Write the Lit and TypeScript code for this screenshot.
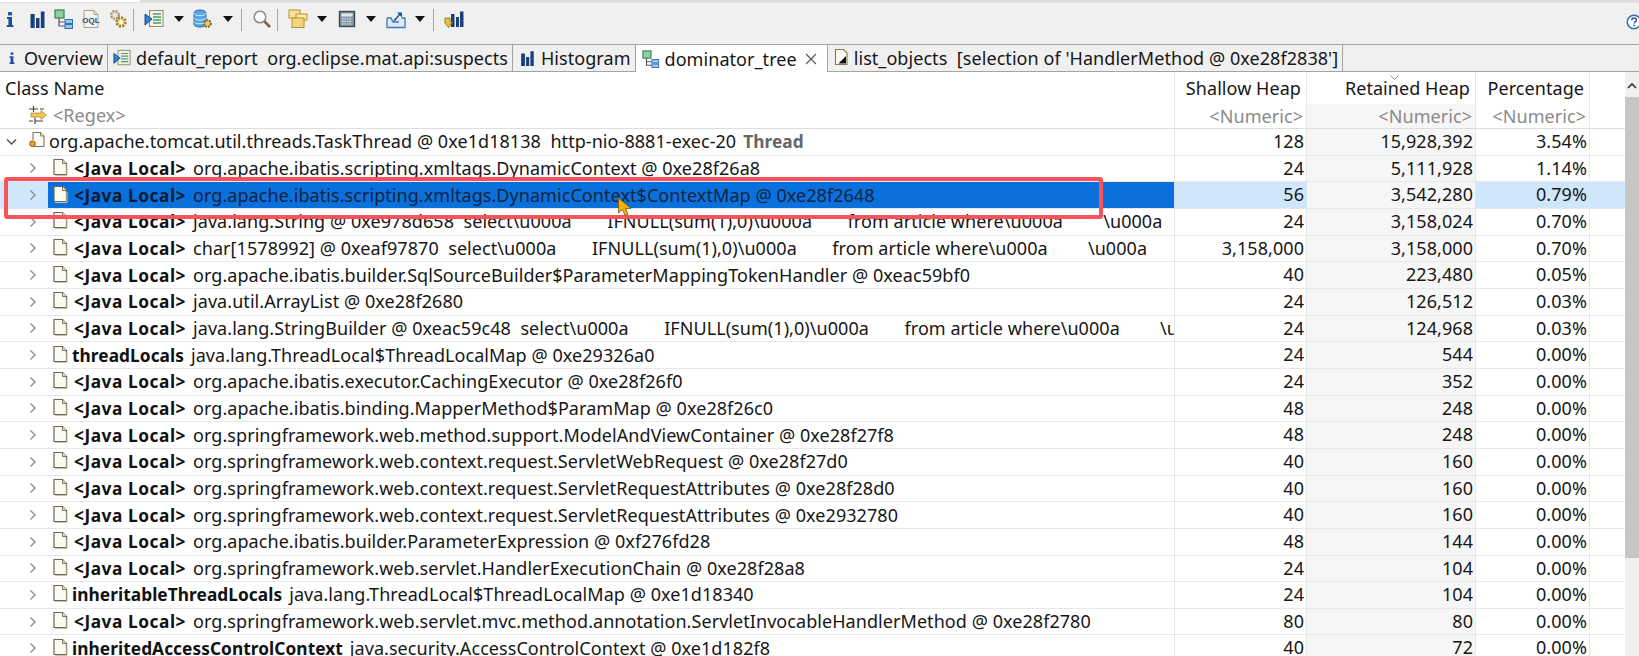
import { LitElement, html, css } from 'lit';
import { customElement } from 'lit/decorators.js';

// icons, all drawn in a 20x20 box unless noted
const iInfo = html`<svg class="ic" viewBox="0 0 20 20"><rect x="8" y="3" width="4" height="3.4" fill="#1f5aa8"/><path d="M7 8h5v8h1.4v2H6.8v-2h1.6v-6H7z" fill="#1c4f9c"/></svg>`;
const iBars = html`<svg class="ic" viewBox="0 0 20 20"><path d="M3.500 5h4.200v14H3.500zM9 9h3.500v10H9zM13.800 2.500h3.700V19h-3.700z" fill="#1b3f78"/></svg>`;
const iTree = html`<svg class="ic" viewBox="0 0 20 20"><rect x="1" y="1" width="9" height="8" fill="#8fd0a0" stroke="#3f7a58" stroke-width="1.200"/><path d="M5 9v8h6M5 13h6" fill="none" stroke="#555" stroke-width="1.200"/><rect x="11" y="10.500" width="7.500" height="4" fill="#9cc4ec" stroke="#2f6fb4"/><rect x="11" y="15.500" width="7.500" height="4" fill="#9cc4ec" stroke="#2f6fb4"/></svg>`;
const iOql = html`<svg class="ic" viewBox="0 0 20 20"><path d="M3 1.500h10l4 4v13H3z" fill="#f4f2ea" stroke="#a8a290"/><path d="M13 1.500v4h4" fill="#e0dccb" stroke="#a8a290"/><text x="10" y="14" font-size="8" font-weight="700" text-anchor="middle" font-family="Liberation Sans" fill="#2c4a80">OQL</text></svg>`;
const iGears = html`<svg class="ic" viewBox="0 0 20 20"><circle cx="7" cy="6" r="3.800" fill="#efe6cf" stroke="#a09070" stroke-width="2.400" stroke-dasharray="1.800 1.200"/><circle cx="13" cy="13" r="4.300" fill="#f6dc9c" stroke="#a87a28" stroke-width="2.800" stroke-dasharray="2 1.300"/><circle cx="13" cy="13" r="1.700" fill="#fff"/></svg>`;
const iReport = html`<svg class="ic" viewBox="0 0 20 20"><rect x="5.500" y="1.500" width="13.500" height="16" fill="#f2f4ea" stroke="#8c8a70"/><path d="M9 5h8M9 8h8M9 11h8M9 14h8" stroke="#4f9a6a" stroke-width="1.300"/><path d="M1 5l7 5-7 6z" fill="#2f7fd0" stroke="#174f90"/></svg>`;
const iDb = html`<svg class="ic" viewBox="0 0 20 20"><path d="M1 4c0-4 12-4 12 0v11c0 4-12 4-12 0z" fill="#5aa4e4" stroke="#2468ac"/><path d="M1 4c0 3.500 12 3.500 12 0M1 8.500c0 3.500 12 3.500 12 0M1 12.500c0 3 12 3 12 0" fill="none" stroke="#d4eafa"/><circle cx="14.500" cy="14.500" r="3.300" fill="#f0cc70" stroke="#7a6428" stroke-width="2" stroke-dasharray="1.800 1"/></svg>`;
const iSearch = html`<svg class="ic" viewBox="0 0 20 20"><circle cx="8" cy="8" r="5.800" fill="#fbfbfb" stroke="#8a8a8a" stroke-width="1.500"/><path d="M12.500 12.500l5.500 5.500" stroke="#7a5a48" stroke-width="2.500"/></svg>`;
const iCopies = html`<svg class="ic" viewBox="0 0 20 20"><rect x="1" y="1" width="11" height="8" fill="#f8e2a0" stroke="#b8902c"/><rect x="8" y="5" width="11" height="6" fill="#fae8b0" stroke="#b8902c"/><rect x="4" y="9" width="12" height="9.500" fill="#f6d67c" stroke="#b8902c"/></svg>`;
const iCalc = html`<svg class="ic" viewBox="0 0 20 20"><rect x="2.500" y="2.500" width="15" height="15" fill="#8a98a4" stroke="#3c4850" stroke-width="1.400"/><rect x="4.500" y="4.500" width="11" height="3" fill="#dfe8ee"/><path d="M5 10h10M5 12.500h10M5 15h10" stroke="#e8f0f4" stroke-dasharray="1.500 1"/></svg>`;
const iExport = html`<svg class="ic" viewBox="0 0 20 20"><path d="M1 9v9.500h18V9h-3.500M1 9h4l2 4h6" fill="#dceafa" stroke="#3a78bc" stroke-width="1.300"/><path d="M8 12l6-7" stroke="#23527f" stroke-width="1.500"/><path d="M11 3.500h5v5z" fill="#23527f"/></svg>`;
const iLast = html`<svg class="ic" viewBox="0 0 20 20"><path d="M7 5h3.500v13H7zM12 8h3v10h-3zM16 2.500h3.500V18H16z" fill="#1b3f78"/><path d="M1 9h5v4h2.500l-4 5.500-4-5.500H1z" fill="#f0c040" stroke="#8a6a10" stroke-width=".8"/></svg>`;
const iFilter = html`<svg class="ic" viewBox="0 0 20 20"><path d="M1 4h9M12 4h4M1 16h4M7 16h8M5.500 1v6M7 12.500V19" stroke="#444" stroke-width="1.200" fill="none"/><path d="M3 8h10V5.500l5.500 4.500-5.500 4.500V12H3z" fill="#f2c552" stroke="#a88420" stroke-width=".7"/></svg>`;
const iHelp = html`<svg class="help" viewBox="0 0 16 16"><circle cx="8" cy="8" r="6.700" fill="#fff" stroke="#2a6eb0" stroke-width="1.500"/><path d="M5.800 6.200c0-3 4.600-3 4.600-.2 0 1.800-2.300 1.800-2.300 3.600" fill="none" stroke="#2a5a90" stroke-width="1.500"/><rect x="7.300" y="10.700" width="1.600" height="1.600" fill="#2a5a90"/></svg>`;
const iTabInfo = html`<svg class="tic small" viewBox="0 0 20 20"><rect x="8" y="2" width="4" height="3.400" fill="#1f5aa8"/><path d="M6.500 7.500h5.500v9h1.500v2H6.500v-2H8v-7H6.500z" fill="#1c4f9c"/></svg>`;

const page = (inner: unknown = null) => html`<svg class="doc" viewBox="0 0 16 18"><path d="M2 1.500h8.500L14.500 5.500v11H2z" fill="#fbfbf4" stroke="#6e6850" stroke-width="1.200"/><path d="M10.500 1.500v4h4" fill="#ece8d8" stroke="#6e6850" stroke-width=".9"/><path d="M3 17.500h12V7" fill="none" stroke="#c8c4b4"/>${inner}</svg>`;
const iDoc = page();
const iArray = page(html`<path d="M6.800 7.500H5.500v6h1.300M9.200 7.500h1.300v6H9.200" fill="none" stroke="#1d4f8c" stroke-width="1.100"/>`);
const iThread = html`<svg class="doc thread" viewBox="0 0 18 18"><path d="M5 1.500h7.500L16 5v10.500H5" fill="#fbfbf4" stroke="#7c7660" stroke-width="1.100"/><path d="M12.500 1.500V5H16" fill="#ece8d8" stroke="#7c7660" stroke-width=".9"/><path d="M5 1.500V9" stroke="#7c7660" stroke-width="1.100"/><circle cx="4.500" cy="12.800" r="2.800" fill="#f4a028" stroke="#8c5410"/></svg>`;
const iList = html`<svg class="doc" viewBox="0 0 16 18"><path d="M2.500 1.500h8l3.500 3.500v11.500H2.500z" fill="#fbfaf0" stroke="#8a7a50" stroke-width="1.100"/><path d="M13 8v7.500H5.500z" fill="#111"/></svg>`;

const arrow = html`<span class="drop"></span>`;

interface Row {
  tag: string;
  text: string;
  shallow: string;
  retained: string;
  pct: string;
  icon?: unknown;
  sel?: boolean;
}

const JL = '<Java Local>';
const ROWS: Row[] = [
  { tag: JL, text: 'org.apache.ibatis.scripting.xmltags.DynamicContext @ 0xe28f26a8', shallow: '24', retained: '5,111,928', pct: '1.14%' },
  { tag: JL, text: 'org.apache.ibatis.scripting.xmltags.DynamicContext$ContextMap @ 0xe28f2648', shallow: '56', retained: '3,542,280', pct: '0.79%', sel: true },
  { tag: JL, text: 'java.lang.String @ 0xe978d658  select\\u000a\tIFNULL(sum(1),0)\\u000a\tfrom article where\\u000a\t \\u000a', shallow: '24', retained: '3,158,024', pct: '0.70%' },
  { tag: JL, text: 'char[1578992] @ 0xeaf97870  select\\u000a\tIFNULL(sum(1),0)\\u000a\tfrom article where\\u000a\t \\u000a', shallow: '3,158,000', retained: '3,158,000', pct: '0.70%', icon: iArray },
  { tag: JL, text: 'org.apache.ibatis.builder.SqlSourceBuilder$ParameterMappingTokenHandler @ 0xeac59bf0', shallow: '40', retained: '223,480', pct: '0.05%' },
  { tag: JL, text: 'java.util.ArrayList @ 0xe28f2680', shallow: '24', retained: '126,512', pct: '0.03%' },
  { tag: JL, text: 'java.lang.StringBuilder @ 0xeac59c48  select\\u000a\tIFNULL(sum(1),0)\\u000a\tfrom article where\\u000a\t \\u000a', shallow: '24', retained: '124,968', pct: '0.03%' },
  { tag: 'threadLocals', text: 'java.lang.ThreadLocal$ThreadLocalMap @ 0xe29326a0', shallow: '24', retained: '544', pct: '0.00%' },
  { tag: JL, text: 'org.apache.ibatis.executor.CachingExecutor @ 0xe28f26f0', shallow: '24', retained: '352', pct: '0.00%' },
  { tag: JL, text: 'org.apache.ibatis.binding.MapperMethod$ParamMap @ 0xe28f26c0', shallow: '48', retained: '248', pct: '0.00%' },
  { tag: JL, text: 'org.springframework.web.method.support.ModelAndViewContainer @ 0xe28f27f8', shallow: '48', retained: '248', pct: '0.00%' },
  { tag: JL, text: 'org.springframework.web.context.request.ServletWebRequest @ 0xe28f27d0', shallow: '40', retained: '160', pct: '0.00%' },
  { tag: JL, text: 'org.springframework.web.context.request.ServletRequestAttributes @ 0xe28f28d0', shallow: '40', retained: '160', pct: '0.00%' },
  { tag: JL, text: 'org.springframework.web.context.request.ServletRequestAttributes @ 0xe2932780', shallow: '40', retained: '160', pct: '0.00%' },
  { tag: JL, text: 'org.apache.ibatis.builder.ParameterExpression @ 0xf276fd28', shallow: '48', retained: '144', pct: '0.00%' },
  { tag: JL, text: 'org.springframework.web.servlet.HandlerExecutionChain @ 0xe28f28a8', shallow: '24', retained: '104', pct: '0.00%' },
  { tag: 'inheritableThreadLocals', text: 'java.lang.ThreadLocal$ThreadLocalMap @ 0xe1d18340', shallow: '24', retained: '104', pct: '0.00%' },
  { tag: JL, text: 'org.springframework.web.servlet.mvc.method.annotation.ServletInvocableHandlerMethod @ 0xe28f2780', shallow: '80', retained: '80', pct: '0.00%' },
  { tag: 'inheritedAccessControlContext', text: 'java.security.AccessControlContext @ 0xe1d182f8', shallow: '40', retained: '72', pct: '0.00%' },
];

@customElement('app-root')
export class AppRoot extends LitElement {
  static styles = css`
    :host {
      display: block;
      position: relative;
      height: 656px;
      overflow: hidden;
      background: #fff;
      color: #161616;
      font-family: 'Noto Sans', sans-serif;
      font-size: 18px;
      letter-spacing: .06px;
    }
    .strip {
      height: 3px;
      background: linear-gradient(90deg, #fff 140px, #dcdcdc 140px);
      border-bottom: 1px solid #e2e2e2;
      box-sizing: border-box;
    }
    .toolbar {
      height: 41px;
      background: #f0f0f0;
      display: flex;
      align-items: flex-start;
      padding-top: 6px;
      box-sizing: border-box;
      position: relative;
    }
    .ic { width: 20px; height: 20px; flex: none; }
    .grp { display: flex; align-items: center; height: 20px; gap: 9.5px; }
    .grp.first { gap: 7px; }
    .sep { width: 1px; height: 22px; background: #a8a8a8; flex: none; margin: 0 10px 0 8px; }
    .sep.a { margin-left: 5px; }
    .drop {
      width: 0; height: 0; flex: none;
      border-left: 5px solid transparent;
      border-right: 5px solid transparent;
      border-top: 6px solid #111;
    }
    .help { width: 16px; height: 16px; position: absolute; right: -3px; top: 11px; }

    .tabs {
      height: 28px;
      background: #f0f0f0;
      border-top: 1px solid #a4a4a4;
      border-bottom: 1px solid #a4a4a4;
      box-sizing: border-box;
      display: flex;
    }
    .tab {
      display: flex;
      align-items: center;
      gap: 5px;
      white-space: pre;
      border-right: 1px solid #a4a4a4;
      padding: 0 4px 0 5px;
      height: 26px;
      box-sizing: border-box;
    }
    .tab.on { background: #fff; height: 27px; padding: 0 10px 0 6px; }
    .tab .ic, .tic { width: 18px; height: 18px; flex: none; }
    .tic.small { width: 14px; }
    .tab .doc { width: 16px; height: 18px; flex: none; }
    .close { width: 12px; height: 12px; margin-left: 3px; flex: none; }

    .main { display: flex; height: 584px; }
    .table { flex: 1; min-width: 0; }
    .r {
      display: grid;
      grid-template-columns: 1175px 132px 169px 114px 1fr;
      height: 26.67px;
      box-sizing: border-box;
      border-bottom: 1px solid #e8e8e8;
      line-height: 25px;
    }
    .r > div { box-sizing: border-box; border-right: 1px solid #e8e8e8; white-space: pre; overflow: hidden; }
    .r > div:last-child { border-right: 0; }
    .num { text-align: right; padding-right: 2px; }
    .ret { background: #f6f6f6; }
    .head { height: 30px; border-bottom: 0; line-height: 32px; }
    .head .num { padding-right: 5px; }
    .head .ret { background: #fff; position: relative; overflow: visible; }
    .caret { position: absolute; left: 83px; top: 3px; width: 9px; height: 5px; }
    .flt { height: 27px; color: #8a8a8a; line-height: 29px; border-bottom: 1px solid #dedede; }
    .flt .num { padding-right: 3px; }
    .name { display: flex; align-items: center; }
    .head .name { padding-left: 5px; }
    .flt .name { padding-left: 28px; gap: 5px; }
    .chev { width: 48px; flex: none; display: flex; justify-content: center; padding-left: 18px; box-sizing: border-box; }
    .chev svg { width: 8px; height: 12px; }
    .chev.open { width: 24px; padding-left: 0; }
    .chev.open svg { width: 11px; height: 8px; margin-left: -1px; }
    .cell { flex: 1; min-width: 0; display: flex; align-items: center; height: 100%; padding-left: 4px; overflow: hidden; }
    .doc { width: 16px; height: 18px; flex: none; margin-bottom: 3px; }
    .doc.thread { width: 18px; }
    .cell .lab { margin-left: 6px; }
    .cell .lab.top { margin-left: 3px; }
    .tag { font-weight: 700; font-size: 17.3px; margin-right: 7px; margin-left: -2px; color: #111; }
    .tag.jl { margin-left: 0; letter-spacing: .55px; }
    .gap { display: inline-block; width: 35.5px; }
    .dim { color: #666; font-weight: 700; font-size: 17.3px; margin-left: 7px; }
    .sel { background: #cfe6fb; }
    .sel > div { border-right-color: #cfe6fb; }
    .sel .cell { background: #0a70dc; border: 1px solid #0a5cb4; border-width: 1px 0; color: #10243c; }
    .sel .tag { color: #071a30; }

    .scroll { width: 14px; background: #f0f0f0; flex: none; display: flex; flex-direction: column; align-items: center; }
    .scroll svg { width: 10px; height: 7px; margin: 10px 0 8px; }
    .thumb { width: 100%; height: 461px; background: #c6c6c6; }

    .mark {
      position: absolute;
      left: 4px; top: 177px;
      width: 1099px; height: 42px;
      box-sizing: border-box;
      border: 4px solid #f9525a;
      border-radius: 3px;
    }
    .cursor { position: absolute; left: 617px; top: 197px; width: 16px; height: 20px; }
  `;

  private rowText(text: string) {
    return text.split('\t').map((part, i) => i ? html`<span class="gap"></span>${part}` : part);
  }

  private row(r: Row) {
    return html`
      <div class="r ${r.sel ? 'sel' : ''}">
        <div class="name">
          <span class="chev"><svg viewBox="0 0 8 12"><path d="M1.500 1.500L6 6l-4.500 4.500" fill="none" stroke="#8c8c8c" stroke-width="1.400"/></svg></span>
          <div class="cell">
            ${r.icon ?? iDoc}
            <span class="lab"><span class="tag ${r.tag === JL ? 'jl' : ''}">${r.tag}</span>${this.rowText(r.text)}</span>
          </div>
        </div>
        <div class="num">${r.shallow}</div>
        <div class="num ret">${r.retained}</div>
        <div class="num">${r.pct}</div>
        <div></div>
      </div>`;
  }

  render() {
    return html`
      <div class="strip"></div>
      <div class="toolbar">
        <div class="grp first">${iInfo}${iBars}${iTree}${iOql}${iGears}</div>
        <span class="sep a"></span>
        <div class="grp">${iReport}${arrow}${iDb}${arrow}</div>
        <span class="sep"></span>
        <div class="grp">${iSearch}</div>
        <span class="sep a"></span>
        <div class="grp">${iCopies}${arrow}${iCalc}${arrow}${iExport}${arrow}</div>
        <span class="sep"></span>
        <div class="grp">${iLast}</div>
        ${iHelp}
      </div>
      <div class="tabs">
        <div class="tab">${iTabInfo}<span>Overview</span></div>
        <div class="tab">${iReport}<span>default_report  org.eclipse.mat.api:suspects</span></div>
        <div class="tab">${iBars}<span>Histogram</span></div>
        <div class="tab on">${iTree}<span>dominator_tree</span><svg class="close" viewBox="0 0 12 12"><path d="M1 1l10 10M11 1L1 11" stroke="#555" stroke-width="1.100"/></svg></div>
        <div class="tab">${iList}<span>list_objects  [selection of 'HandlerMethod @ 0xe28f2838']</span></div>
      </div>
      <div class="main">
        <div class="table">
          <div class="r head">
            <div class="name">Class Name</div>
            <div class="num">Shallow Heap</div>
            <div class="num ret"><svg class="caret" viewBox="0 0 9 5"><path d="M.5.5l4 4 4-4" fill="none" stroke="#888"/></svg>Retained Heap</div>
            <div class="num">Percentage</div>
            <div></div>
          </div>
          <div class="r flt">
            <div class="name">${iFilter}<span>&lt;Regex&gt;</span></div>
            <div class="num">&lt;Numeric&gt;</div>
            <div class="num ret">&lt;Numeric&gt;</div>
            <div class="num">&lt;Numeric&gt;</div>
            <div></div>
          </div>
          <div class="r">
            <div class="name">
              <span class="chev open"><svg viewBox="0 0 11 8"><path d="M1 1.500l4.500 4.500L10 1.500" fill="none" stroke="#555" stroke-width="1.500"/></svg></span>
              <div class="cell">
                ${iThread}
                <span class="lab top">org.apache.tomcat.util.threads.TaskThread @ 0xe1d18138  http-nio-8881-exec-20<span class="dim">Thread</span></span>
              </div>
            </div>
            <div class="num">128</div>
            <div class="num ret">15,928,392</div>
            <div class="num">3.54%</div>
            <div></div>
          </div>
          ${ROWS.map(r => this.row(r))}
        </div>
        <div class="scroll">
          <svg viewBox="0 0 10 7"><path d="M1 6l4-4 4 4" fill="none" stroke="#333" stroke-width="1.600"/></svg>
          <div class="thumb"></div>
        </div>
      </div>
      <div class="mark"></div>
      <svg class="cursor" viewBox="0 0 16 20"><path d="M1.500 1v15l4-3.500 2.500 6 3-1.300-2.500-5.700H14z" fill="#f0b010" stroke="#7a5a08" stroke-width=".8"/></svg>
    `;
  }
}
